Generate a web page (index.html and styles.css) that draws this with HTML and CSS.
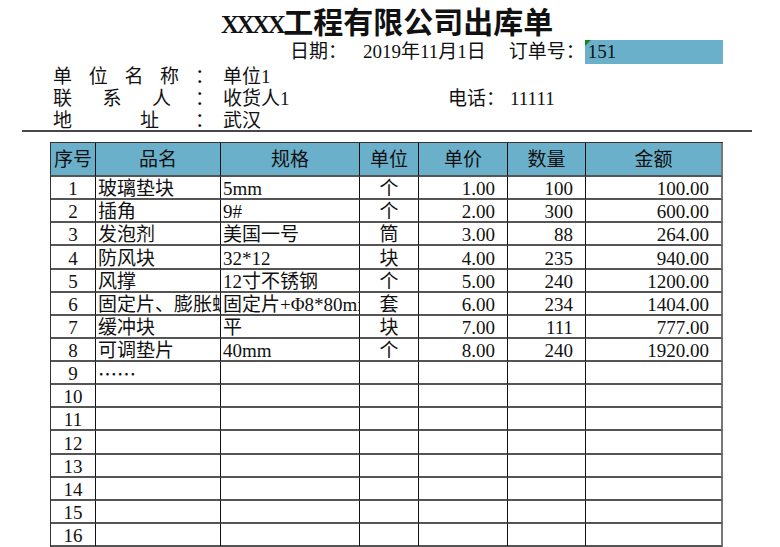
FILE: index.html
```html
<!DOCTYPE html>
<html lang="zh-CN">
<head>
<meta charset="utf-8">
<title>XXXX工程有限公司出库单</title>
<link rel="stylesheet" href="styles.css">
</head>
<body>
<div class="sheet">
  <div class="title"><span class="x">XXXX</span><span class="cjk">工程有限公司出库单</span></div>
  <div class="dateline">
    <span>日期：</span><span class="date">2019年11月1日</span><span class="order-label">订单号：</span><span class="order-no">151</span>
  </div>
  <div class="info">
    <div class="info-row"><span class="label l4"><span>单</span><span>位</span><span>名</span><span>称</span></span><span class="colon">：</span><span class="value">单位1</span></div>
    <div class="info-row"><span class="label l3"><span>联</span><span>系</span><span>人</span></span><span class="colon">：</span><span class="value">收货人1</span><span>电话：</span><span class="tel">11111</span></div>
    <div class="info-row"><span class="label l2"><span>地</span><span>址</span></span><span class="colon">：</span><span class="value">武汉</span></div>
  </div>
  <div class="rule"></div>
  <div class="grid">
    <div class="c h">序号</div><div class="c h">品名</div><div class="c h">规格</div><div class="c h">单位</div><div class="c h">单价</div><div class="c h">数量</div><div class="c h last">金额</div>

    <div class="c ctr">1</div><div class="c l">玻璃垫块</div><div class="c l">5mm</div><div class="c ctr">个</div><div class="c r">1.00</div><div class="c r">100</div><div class="c r last">100.00</div>
    <div class="c ctr">2</div><div class="c l">插角</div><div class="c l">9#</div><div class="c ctr">个</div><div class="c r">2.00</div><div class="c r">300</div><div class="c r last">600.00</div>
    <div class="c ctr">3</div><div class="c l">发泡剂</div><div class="c l">美国一号</div><div class="c ctr">筒</div><div class="c r">3.00</div><div class="c r">88</div><div class="c r last">264.00</div>
    <div class="c ctr">4</div><div class="c l">防风块</div><div class="c l">32*12</div><div class="c ctr">块</div><div class="c r">4.00</div><div class="c r">235</div><div class="c r last">940.00</div>
    <div class="c ctr">5</div><div class="c l">风撑</div><div class="c l">12寸不锈钢</div><div class="c ctr">个</div><div class="c r">5.00</div><div class="c r">240</div><div class="c r last">1200.00</div>
    <div class="c ctr">6</div><div class="c l">固定片、膨胀螺丝</div><div class="c l">固定片+Φ8*80mm</div><div class="c ctr">套</div><div class="c r">6.00</div><div class="c r">234</div><div class="c r last">1404.00</div>
    <div class="c ctr">7</div><div class="c l">缓冲块</div><div class="c l">平</div><div class="c ctr">块</div><div class="c r">7.00</div><div class="c r">111</div><div class="c r last">777.00</div>
    <div class="c ctr">8</div><div class="c l">可调垫片</div><div class="c l">40mm</div><div class="c ctr">个</div><div class="c r">8.00</div><div class="c r">240</div><div class="c r last">1920.00</div>
    <div class="c ctr">9</div><div class="c l dots">……</div><div class="c l"></div><div class="c ctr"></div><div class="c r"></div><div class="c r"></div><div class="c r last"></div>
    <div class="c ctr">10</div><div class="c l"></div><div class="c l"></div><div class="c ctr"></div><div class="c r"></div><div class="c r"></div><div class="c r last"></div>
    <div class="c ctr">11</div><div class="c l"></div><div class="c l"></div><div class="c ctr"></div><div class="c r"></div><div class="c r"></div><div class="c r last"></div>
    <div class="c ctr">12</div><div class="c l"></div><div class="c l"></div><div class="c ctr"></div><div class="c r"></div><div class="c r"></div><div class="c r last"></div>
    <div class="c ctr">13</div><div class="c l"></div><div class="c l"></div><div class="c ctr"></div><div class="c r"></div><div class="c r"></div><div class="c r last"></div>
    <div class="c ctr">14</div><div class="c l"></div><div class="c l"></div><div class="c ctr"></div><div class="c r"></div><div class="c r"></div><div class="c r last"></div>
    <div class="c ctr">15</div><div class="c l"></div><div class="c l"></div><div class="c ctr"></div><div class="c r"></div><div class="c r"></div><div class="c r last"></div>
    <div class="c ctr">16</div><div class="c l"></div><div class="c l"></div><div class="c ctr"></div><div class="c r"></div><div class="c r"></div><div class="c r last"></div>
  </div>
</div>
</body>
</html>
```

FILE: styles.css
```css
html, body {
  margin: 0;
  padding: 0;
  background: #fff;
}

body {
  color: #111;
  font-family: "Liberation Serif", "Noto Sans CJK SC", serif;
  font-size: 19px;
  overflow: hidden;
}

.sheet {
  width: 780px;
  height: 547px;
  overflow: hidden;
}

.title {
  display: flex;
  align-items: baseline;
  height: 40px;
  padding-left: 221px;
  line-height: 40px;
  font-size: 27px;
  font-weight: 700;
  white-space: nowrap;
}

.title .x {
  font-size: 25px;
  letter-spacing: -2.5px;
}

.title .cjk {
  font-family: "Noto Sans CJK SC", sans-serif;
  font-size: 30px;
}

.dateline {
  display: flex;
  height: 24px;
  line-height: 24px;
  padding-left: 290px;
  white-space: nowrap;
}

.date {
  margin-left: 16px;
}

.order-label {
  margin-left: 23px;
}

.order-no {
  position: relative;
  width: 138px;
  padding-left: 3px;
  box-sizing: border-box;
  background: #6bb0cb;
}

.order-no::before {
  content: "";
  position: absolute;
  left: 0;
  top: 0;
  border-top: 6px solid #15861a;
  border-right: 6px solid transparent;
}

.info {
  height: 66px;
  padding: 2px 0 0 53px;
  box-sizing: border-box;
}

.info-row {
  display: flex;
  height: 22px;
  line-height: 22px;
  white-space: nowrap;
}

.label {
  display: flex;
  flex: none;
  width: 142px;
}

.l4 span + span { margin-left: 16.7px; }
.l3 span + span { margin-left: 30.5px; }
.l2 span + span { margin-left: 68px; }

.colon {
  flex: none;
  width: 19px;
}

.value {
  flex: none;
  width: 225px;
  margin-left: 9px;
}

.tel {
  margin-left: 5px;
}

.rule {
  height: 2px;
  margin: 0 28px 0 22px;
  background: #474747;
}

.grid {
  display: grid;
  width: 673px;
  margin: 10px 0 0 50px;
  grid-template-columns: 45px 125px 139px 59px 89px 78px 137px;
  grid-template-rows: 34px repeat(16, 23.125px);
  border-left: 1px solid #333;
  border-top: 1px solid #333;
  box-sizing: border-box;
}

.c {
  display: flex;
  align-items: flex-end;
  min-width: 0;
  overflow: hidden;
  white-space: nowrap;
  line-height: 19px;
  border-right: 1px solid #111;
  border-bottom: 2px solid #555;
  box-sizing: border-box;
}

.h {
  align-items: center;
  justify-content: center;
  background: #6bb0cb;
}

.ctr {
  justify-content: center;
}

.l {
  padding-left: 2px;
}

.r {
  justify-content: flex-end;
  padding-right: 12px;
}

.last {
  border-right: 2px solid #777;
}

.dots {
  overflow: visible;
  font-family: "Noto Sans CJK SC", sans-serif;
}
```
